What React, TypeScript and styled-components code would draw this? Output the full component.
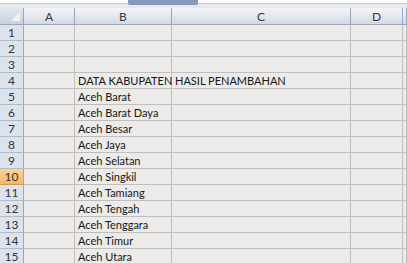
import React from "react";
import styled, { createGlobalStyle } from "styled-components";

const Global = createGlobalStyle`
  html, body { margin: 0; padding: 0; background: #ffffff; }
  body { width: 407px; height: 263px; overflow: hidden; font-family: Lato, "Liberation Sans", sans-serif; }
`;

const Page = styled.div`
  width: 407px;
  height: 263px;
  overflow: hidden;
  display: flex;
  flex-direction: column;
`;

const TopStrip = styled.div`
  height: 8px;
  flex: none;
  display: flex;
  background: linear-gradient(#ffffff 0 3px, #c9cdd3 3px 4px, #e6e8eb 4px 8px);
  padding-left: 128px;
`;

const Tab = styled.div`
  width: 70px;
  height: 5px;
  background: #8898b8;
  border-radius: 0 0 2px 2px;
`;

const Sheet = styled.div`
  display: grid;
  grid-template-columns: 24px 51px 97px 179px 52px 1fr;
  grid-auto-rows: 16px;
  grid-template-rows: 17px;
  background: #ecebe9;
`;

const Corner = styled.div`
  position: relative;
  box-sizing: border-box;
  background: linear-gradient(#e3e7ee, #c9d1dd);
  border-right: 1px solid #9aa7ba;
  border-bottom: 1px solid #9aa7ba;
  &::after {
    content: "";
    position: absolute;
    right: 3px;
    bottom: 3px;
    width: 0;
    height: 0;
    border-left: 9px solid transparent;
    border-bottom: 9px solid #f2f4f7;
  }
`;

const ColHead = styled.div`
  box-sizing: border-box;
  background: linear-gradient(#f3f5f8 0%, #e6e9ef 45%, #d3d9e2 100%);
  border-right: 1px solid #9aa7ba;
  border-bottom: 1px solid #9aa7ba;
  display: flex;
  align-items: center;
  justify-content: center;
  font-size: 12px;
  color: #3a3a3a;
  padding-top: 1px;
`;

const RowHead = styled.div<{ $active?: boolean }>`
  box-sizing: border-box;
  background: ${(p) => (p.$active ? "linear-gradient(#f8d49a, #f1b865)" : "#dde3ec")};
  border-right: 1px solid #9aa7ba;
  border-bottom: 1px solid ${(p) => (p.$active ? "#d29a45" : "#aebbcd")};
  display: flex;
  align-items: center;
  justify-content: center;
  font-size: 12px;
  color: #333333;
`;

const Cell = styled.div`
  box-sizing: border-box;
  border-right: 1px solid #bfbfbf;
  border-bottom: 1px solid #bfbfbf;
  display: flex;
  align-items: center;
  padding-left: 3px;
  font-size: 11px;
  color: #161616;
  white-space: nowrap;
  overflow: visible;
`;

const cols = ["A", "B", "C", "D", ""];

const data: Record<number, [string, string]> = {
  4: ["DATA KABUPATEN", "HASIL PENAMBAHAN"],
  5: ["Aceh Barat", ""],
  6: ["Aceh Barat Daya", ""],
  7: ["Aceh Besar", ""],
  8: ["Aceh Jaya", ""],
  9: ["Aceh Selatan", ""],
  10: ["Aceh Singkil", ""],
  11: ["Aceh Tamiang", ""],
  12: ["Aceh Tengah", ""],
  13: ["Aceh Tenggara", ""],
  14: ["Aceh Timur", ""],
  15: ["Aceh Utara", ""],
};

export default function App() {
  const rows = Array.from({ length: 15 }, (_, i) => i + 1);
  return (
    <Page>
      <Global />
      <TopStrip>
        <Tab />
      </TopStrip>
      <Sheet>
        <Corner />
        {cols.map((c, i) => (
          <ColHead key={i}>{c}</ColHead>
        ))}
        {rows.map((r) => {
          const d = data[r] || ["", ""];
          return (
            <React.Fragment key={r}>
              <RowHead $active={r === 10}>{r}</RowHead>
              <Cell />
              <Cell>{d[0]}</Cell>
              <Cell>{d[1]}</Cell>
              <Cell />
              <Cell />
            </React.Fragment>
          );
        })}
      </Sheet>
    </Page>
  );
}
